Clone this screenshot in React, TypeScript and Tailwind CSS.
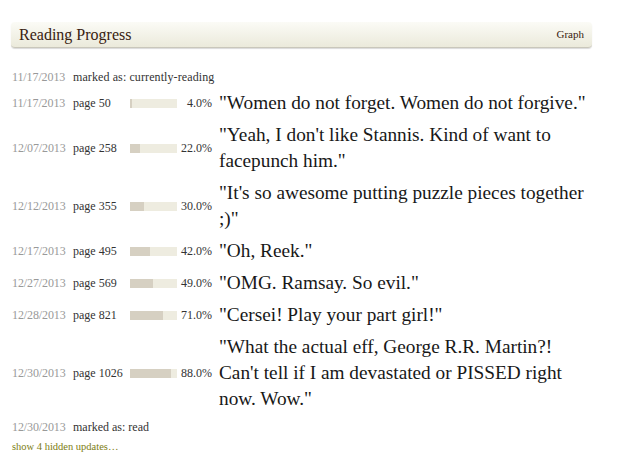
import React from "react";

const rows = [
  { date: "11/17/2013", page: "page 50", pct: 4, quote: "\"Women do not forget. Women do not forgive.\"" },
  { date: "12/07/2013", page: "page 258", pct: 22, quote: "\"Yeah, I don't like Stannis. Kind of want to facepunch him.\"" },
  { date: "12/12/2013", page: "page 355", pct: 30, quote: "\"It's so awesome putting puzzle pieces together ;)\"" },
  { date: "12/17/2013", page: "page 495", pct: 42, quote: "\"Oh, Reek.\"" },
  { date: "12/27/2013", page: "page 569", pct: 49, quote: "\"OMG. Ramsay. So evil.\"" },
  { date: "12/28/2013", page: "page 821", pct: 71, quote: "\"Cersei! Play your part girl!\"" },
  { date: "12/30/2013", page: "page 1026", pct: 88, quote: "\"What the actual eff, George R.R. Martin?! Can't tell if I am devastated or PISSED right now. Wow.\"" },
];

export default function App() {
  return (
    <div className="w-[632px] h-[458px] bg-white overflow-hidden" style={{ fontFamily: "'Liberation Serif', serif" }}>
      <div className="pt-[22px] pl-[11px] w-[592px]">
        <div className="h-[26px] rounded-[4px] flex items-center justify-between px-[8px] bg-gradient-to-b from-[#fbfbf6] to-[#ebeadb] border-b border-[#c9c7bb] shadow-[0_1px_1px_rgba(0,0,0,0.15)]">
          <span className="text-[16px] text-[#382110]">Reading Progress</span>
          <span className="text-[11px] text-[#382110]">Graph</span>
        </div>
      </div>
      <div className="pl-[12px] pt-[21px]">
        <div className="flex items-center h-[16px] text-[12px]">
          <span className="w-[61px] text-[#999] tracking-[-0.1px]">11/17/2013</span>
          <span className="text-[#333] tracking-[0.1px]">marked as: currently-reading</span>
        </div>
        <div className="mt-[2px]">
          {rows.map((r) => (
            <div key={r.date} className="flex items-center py-[3px]">
              <span className="w-[61px] shrink-0 text-[12px] text-[#999] tracking-[-0.1px]">{r.date}</span>
              <span className="w-[57px] shrink-0 text-[12px] text-[#333]">{r.page}</span>
              <div className="w-[47px] h-[9px] shrink-0 bg-[#eeece0] flex">
                <div className="h-full bg-[#d6d0c2]" style={{ width: `${Math.max(r.pct, 4) / 100 * 47}px` }} />
              </div>
              <span className="w-[35px] shrink-0 text-right text-[12px] text-[#333]">{r.pct}.0%</span>
              <span className="ml-[7px] w-[374px] text-[19.3px] leading-[26px] text-[#181818]">{r.quote}</span>
            </div>
          ))}
        </div>
        <div className="flex items-center h-[16px] text-[12px] mt-[4px]">
          <span className="w-[61px] text-[#999] tracking-[-0.1px]">12/30/2013</span>
          <span className="text-[#333]">marked as: read</span>
        </div>
        <div className="text-[10.5px] text-[#7d7d12] mt-[4px]">show 4 hidden updates…</div>
      </div>
    </div>
  );
}
